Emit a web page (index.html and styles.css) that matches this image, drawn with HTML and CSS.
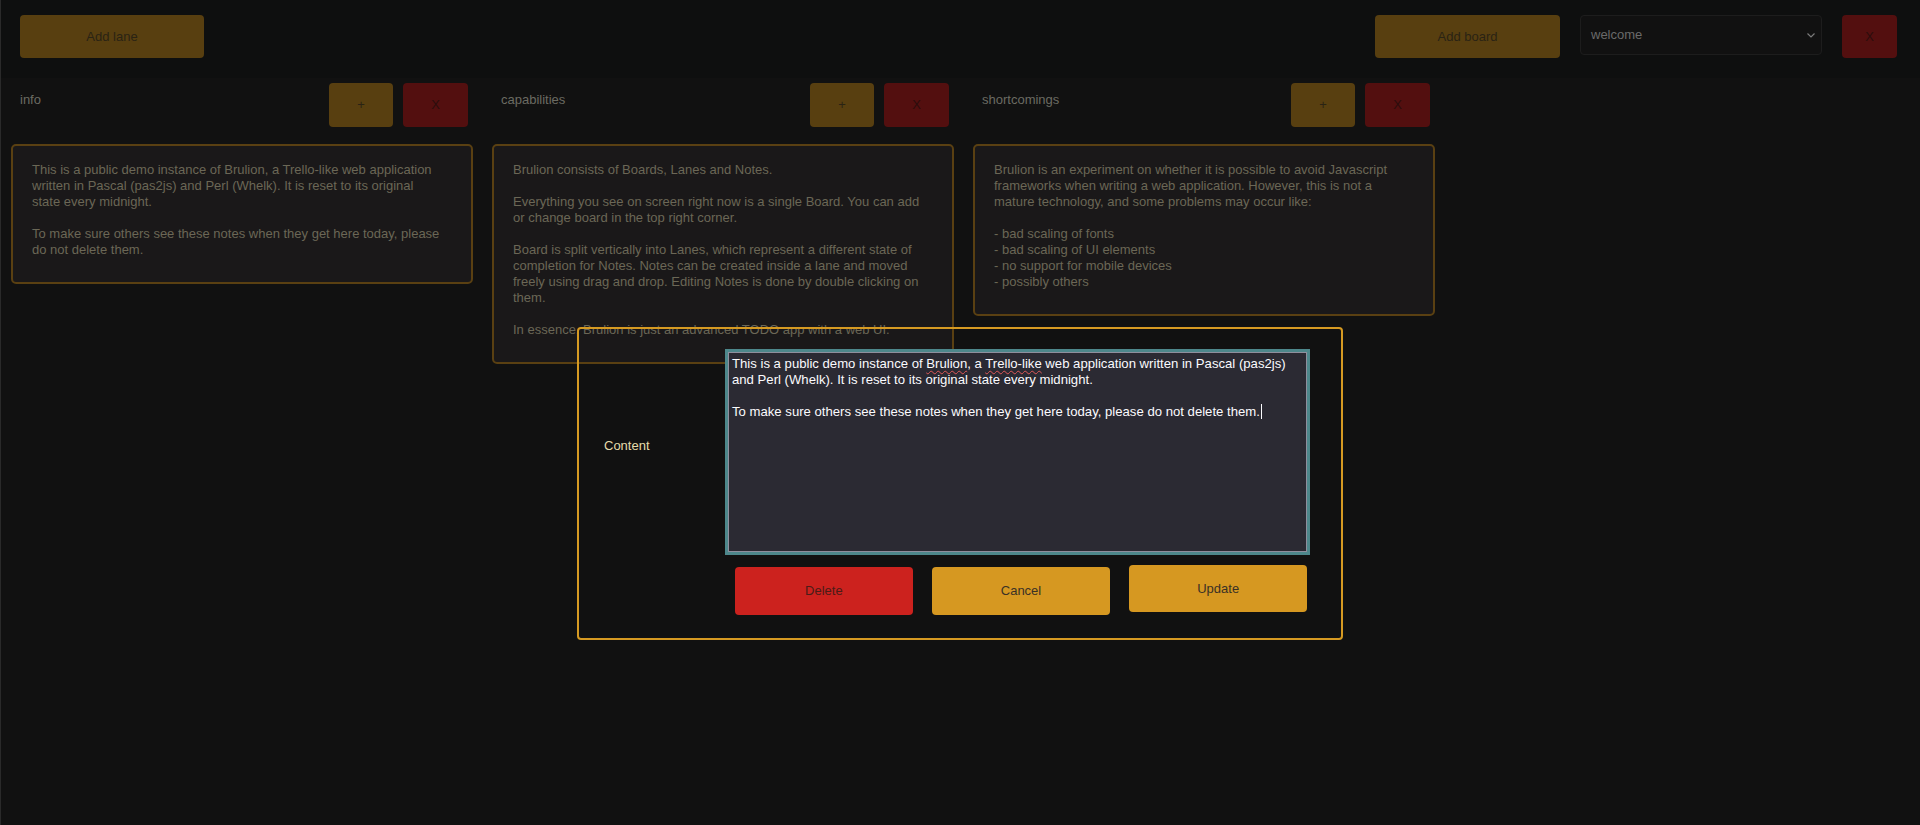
FILE: index.html
```html
<!DOCTYPE html>
<html lang="en">
<head>
<meta charset="utf-8">
<title>Brulion</title>
<link rel="stylesheet" href="styles.css">
</head>
<body>
<div class="app">
  <header class="topbar">
    <button class="btn btn-dim-yellow btn-wide">Add lane</button>
    <button class="btn btn-dim-yellow btn-wide push-right">Add board</button>
    <div class="board-select">
      <span>welcome</span>
      <svg class="chevron" width="8" height="5" viewBox="0 0 8 5"><polyline points="0.5,0.5 4,4 7.5,0.5" fill="none" stroke="#7a7a7a" stroke-width="1.2"/></svg>
    </div>
    <button class="btn btn-dim-red btn-close">X</button>
  </header>

  <main class="board">
    <section class="lane">
      <div class="lane-head">
        <span class="lane-title">info</span>
        <button class="btn btn-dim-yellow btn-plus">+</button>
        <button class="btn btn-dim-red btn-remove">X</button>
      </div>
      <div class="note">This is a public demo instance of Brulion, a Trello-like web application written in Pascal (pas2js) and Perl (Whelk). It is reset to its original state every midnight.

To make sure others see these notes when they get here today, please do not delete them.</div>
    </section>

    <section class="lane">
      <div class="lane-head">
        <span class="lane-title">capabilities</span>
        <button class="btn btn-dim-yellow btn-plus">+</button>
        <button class="btn btn-dim-red btn-remove">X</button>
      </div>
      <div class="note">Brulion consists of Boards, Lanes and Notes.

Everything you see on screen right now is a single Board. You can add or change board in the top right corner.

Board is split vertically into Lanes, which represent a different state of completion for Notes. Notes can be created inside a lane and moved freely using drag and drop. Editing Notes is done by double clicking on them.

In essence, Brulion is just an advanced TODO app with a web UI.</div>
    </section>

    <section class="lane">
      <div class="lane-head">
        <span class="lane-title">shortcomings</span>
        <button class="btn btn-dim-yellow btn-plus">+</button>
        <button class="btn btn-dim-red btn-remove">X</button>
      </div>
      <div class="note">Brulion is an experiment on whether it is possible to avoid Javascript frameworks when writing a web application. However, this is not a mature technology, and some problems may occur like:

- bad scaling of fonts
- bad scaling of UI elements
- no support for mobile devices
- possibly others</div>
    </section>
  </main>

  <div class="modal">
    <label class="field-label">Content</label>
    <div class="editor">This is a public demo instance of <span class="misspelled">Brulion</span>, a <span class="misspelled">Trello-like</span> web application written in Pascal (pas2js) and Perl (Whelk). It is reset to its original state every midnight.

To make sure others see these notes when they get here today, please do not delete them.<span class="caret"></span></div>
    <div class="actions">
      <button class="btn btn-red btn-action low">Delete</button>
      <button class="btn btn-yellow btn-action low">Cancel</button>
      <button class="btn btn-yellow btn-action">Update</button>
    </div>
  </div>
</div>
</body>
</html>
```

FILE: styles.css
```css
* { box-sizing: border-box; }

html, body {
  margin: 0;
  padding: 0;
  background: #111111;
}

body {
  font-family: "Liberation Sans", Arial, sans-serif;
  font-size: 13px;
  line-height: 16px;
}

.app {
  position: relative;
  min-height: 825px;
  border-left: 1px solid #2a2a2a;
  background: #111111;
}

/* ---------- buttons ---------- */
.btn {
  border: none;
  border-radius: 4px;
  font-family: "Liberation Sans", Arial, sans-serif;
  font-size: 13px;
  line-height: 16px;
  padding: 0;
  cursor: pointer;
}
.btn-dim-yellow { background: #583f10; color: #2a2314; }
.btn-dim-red { background: #530f0f; color: #2b0d0c; }
.btn-yellow { background: #d69821; color: #3a3126; }
.btn-red { background: #cc221e; color: #4a1c18; }

/* ---------- top bar ---------- */
.topbar {
  display: flex;
  align-items: flex-start;
  height: 78px;
  padding: 15px 23px 0 19px;
  background: #0e0f0f;
}
.btn-wide { width: 184px; height: 43px; }
.push-right { margin-left: auto; width: 185px; }

.board-select {
  display: flex;
  align-items: center;
  justify-content: space-between;
  margin-left: 20px;
  width: 242px;
  height: 40px;
  padding: 0 6px 0 10px;
  border: 1px solid #1d1d1d;
  border-radius: 4px;
  background: #111111;
  color: #6a6a6a;
  font-size: 13px;
}
.btn-close { margin-left: 20px; width: 55px; height: 43px; }

/* ---------- board ---------- */
.board {
  display: flex;
  align-items: flex-start;
}
.lane {
  width: 481px;
  flex: none;
}
.lane-head {
  display: flex;
  align-items: flex-start;
  height: 66px;
  padding: 5px 14px 0 19px;
}
.lane-title {
  flex: 1;
  margin-top: 9px;
  color: #6b6b62;
}
.btn-plus { width: 64px; height: 44px; }
.btn-remove { width: 65px; height: 44px; margin-left: 10px; }

.note {
  margin: 0 9px 0 10px;
  padding: 16px 29px 24px 19px;
  border: 2px solid #5a4012;
  border-radius: 5px;
  background: #1a1819;
  color: #6b6756;
  white-space: pre-wrap;
}

/* ---------- modal ---------- */
.modal {
  position: absolute;
  left: 576px;
  top: 327px;
  width: 766px;
  height: 313px;
  display: grid;
  grid-template-columns: 149px 579px;
  grid-template-rows: 200px auto;
  row-gap: 13px;
  padding: 23px 34px 23px 0;
  border: 2px solid #d69a22;
  border-radius: 4px;
  background: transparent;
}
.field-label {
  align-self: center;
  padding: 0 0 12px 25px;
  color: #e6dcab;
}
.editor {
  height: 200px;
  padding: 3px 3px;
  border: 1px solid #8f8f9d;
  outline: 3px solid #4d878b;
  background: #2b2a33;
  color: #fbfbfe;
  font-size: 13.15px;
  white-space: pre-wrap;
}
.misspelled {
  text-decoration: underline wavy #e05858;
  text-decoration-thickness: 1px;
  text-underline-offset: 2px;
}
.caret {
  display: inline-block;
  width: 1px;
  height: 15px;
  margin-left: 1px;
  vertical-align: -3px;
  background: #fbfbfe;
}
.actions {
  grid-column: 2;
  display: flex;
  align-items: flex-start;
  gap: 19.5px;
  padding-left: 7px;
}
.btn-action { width: 178px; height: 47px; }
.btn-action.low { margin-top: 2px; height: 48px; }
```
